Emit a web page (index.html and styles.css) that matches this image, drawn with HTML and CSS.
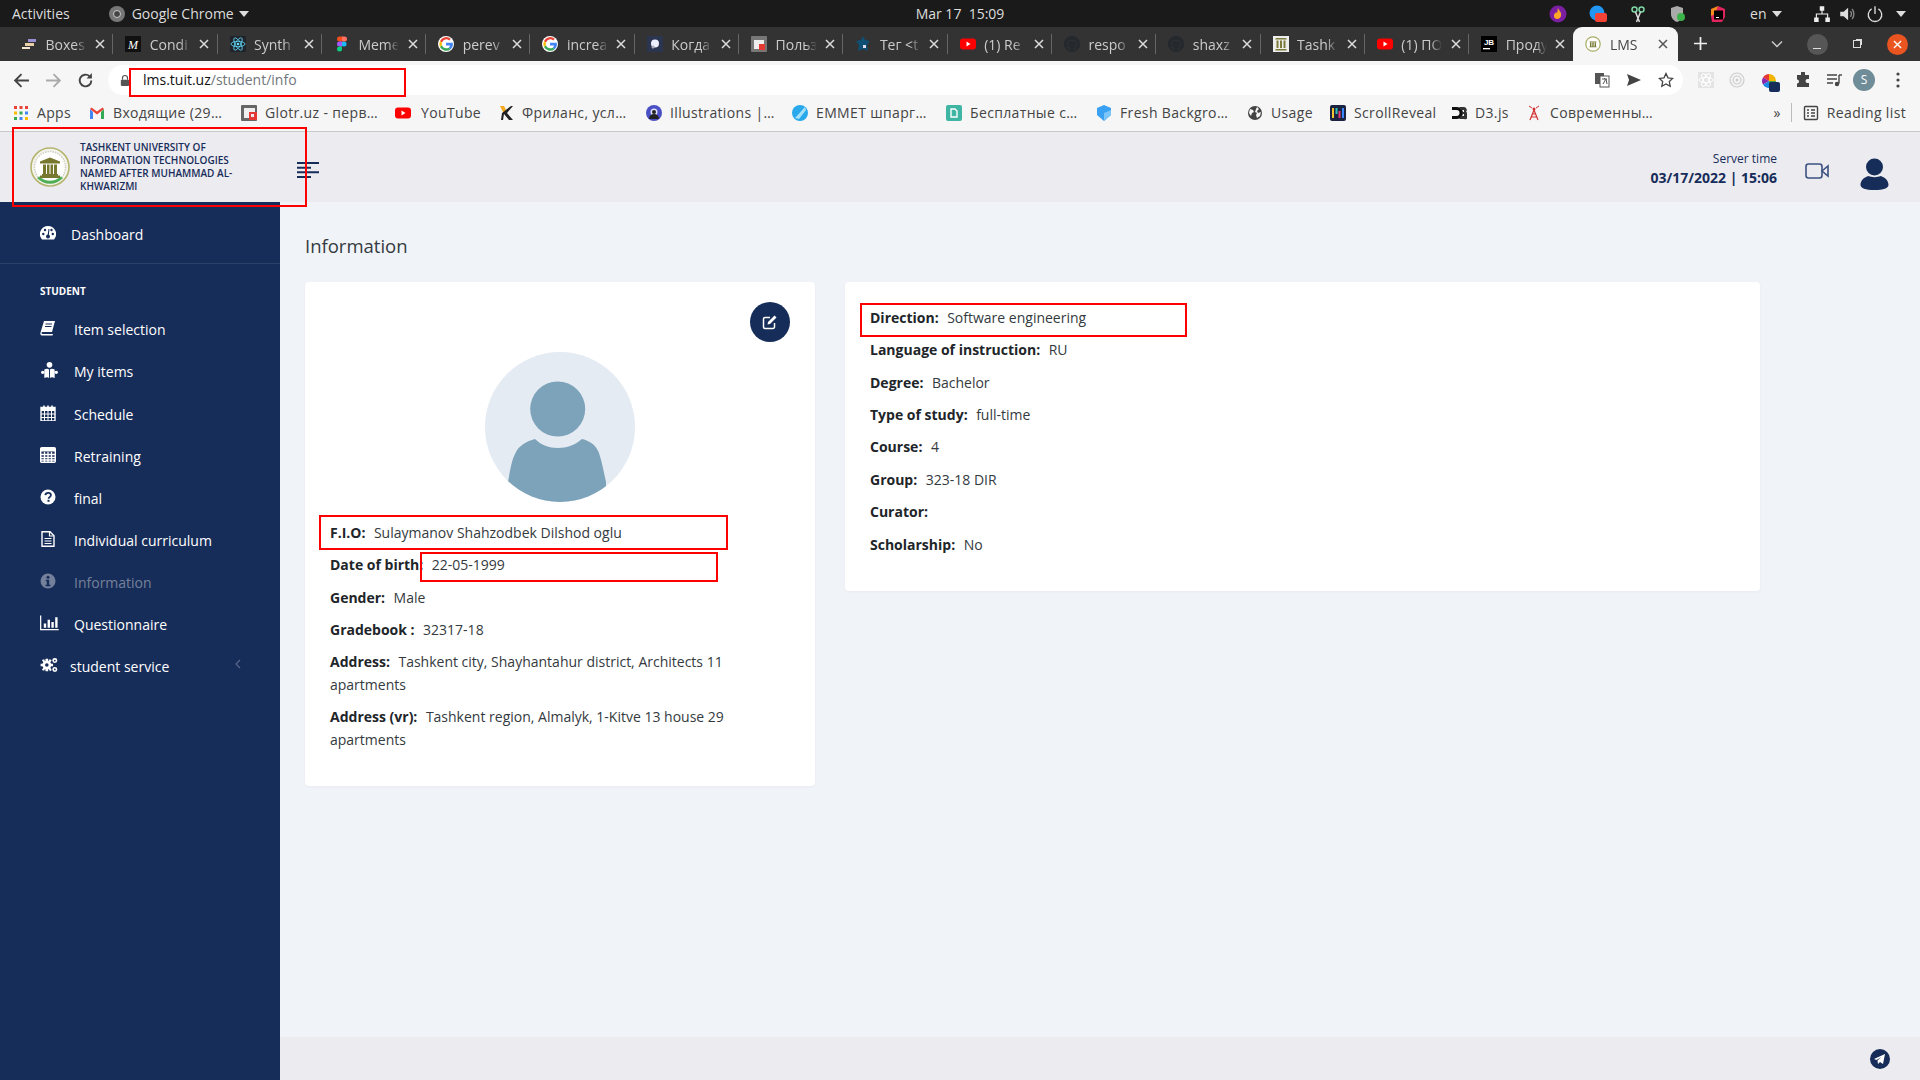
FILE: index.html
```html
<!DOCTYPE html>
<html lang="en">
<head>
  <meta charset="UTF-8">
  <meta name="viewport" content="width=device-width, initial-scale=1.0">
  <title>LMS</title>
  <link rel="stylesheet" href="styles.css">
</head>
<body>
  <svg class="sprite" xmlns="http://www.w3.org/2000/svg">
    <symbol id="google" viewBox="0 0 16 16">
      <circle cx="8" cy="8" r="8" fill="#fff"/>
      <path d="M8 3.2a4.8 4.8 0 0 1 3.2 1.2L12.800 2.800A7 7 0 0 0 2 5l2 1.500A4.800 4.800 0 0 1 8 3.200z" fill="#ea4335"/>
      <path d="M2 5a7 7 0 0 0 0 6l2-1.500a4.800 4.800 0 0 1 0-3z" fill="#fbbc05"/>
      <path d="M2 11a7 7 0 0 0 10.700 2.200l-1.900-1.500A4.800 4.800 0 0 1 4 9.500z" fill="#34a853"/>
      <path d="M14.800 6.800H8v2.600h3.900a3.400 3.400 0 0 1-1.100 2.300l1.900 1.500a7 7 0 0 0 2.100-6.400z" fill="#4285f4"/>
    </symbol>
    <symbol id="youtube" viewBox="0 0 16 16">
      <rect x="0" y="2.500" width="16" height="11" rx="3" fill="#f00"/>
      <path d="M6.500 5.500v5l4-2.500z" fill="#fff"/>
    </symbol>
    <symbol id="github" viewBox="0 0 16 16">
      <circle cx="8" cy="8" r="8" fill="#24292e"/>
      <path d="M5 14v-2.500c-2 .4-2.500-1-2.500-1M11 14v-3c0-1 .8-1.200.8-1.200 1-1 1-3-.2-4.300 0-1-.3-1.500-.3-1.500s-.8 0-1.700.8a6 6 0 0 0-3.200 0C5.500 4 4.700 4 4.700 4s-.3.500-.3 1.500c-1.200 1.300-1.200 3.300-.2 4.300 0 0 .8.200.8 1.200" fill="none" stroke="#333" stroke-width="1"/>
    </symbol>
    <symbol id="close" viewBox="0 0 10 10">
      <path d="M1 1l8 8M9 1l-8 8" fill="none" stroke="currentColor" stroke-width="1.500"/>
    </symbol>
    <symbol id="columns" viewBox="0 0 16 16">
      <path d="M2 3.500h12l-1-1.500H3zM2.500 13h11v1.500h-11z" fill="#7b7b3a"/>
      <path d="M3.500 4.500h2V12h-2zM7 4.500h2V12H7zM10.500 4.500h2V12h-2z" fill="#7b7b3a"/>
    </symbol>
    <symbol id="globe" viewBox="0 0 16 16">
      <circle cx="8" cy="8" r="7" fill="#444"/>
      <path d="M3 4l3 1 1 2-2 1-1 3-2-3zM10 2l2 2-2 2 1 2 3-1-1 4-3 2-1-3 1-2-2-1 1-3z" fill="#f6f6f6"/>
    </symbol>
  </svg>

  <div class="os-bar">
    <div class="os-left">
      <span class="os-activities">Activities</span>
      <svg class="os-chrome" viewBox="0 0 16 16"><circle cx="8" cy="8" r="8" fill="#777"/><circle cx="8" cy="8" r="3.500" fill="#444" stroke="#ccc"/></svg>
      <span>Google Chrome</span>
      <span class="caret"></span>
    </div>
    <div class="os-clock">Mar 17&nbsp; 15:09</div>
    <div class="os-tray">
      <svg class="tray-icon" viewBox="0 0 18 18"><circle cx="9" cy="9" r="8.500" fill="#7b1fa2"/><path d="M9 3c1 3 4 4 3 8-.5 2-2 3-4 3s-3.500-2-3-4c.5-1.500 1.500-2 2-3 .5 1 1 1 1 1 .5-2 .5-3 1-5z" fill="#ffa726"/></svg>
      <svg class="tray-icon" viewBox="0 0 18 18"><circle cx="8" cy="8" r="7.500" fill="#2196f3"/><rect x="6" y="8" width="12" height="9" rx="2" fill="#f44336"/></svg>
      <svg class="tray-icon" viewBox="0 0 18 18"><circle cx="5.500" cy="4.500" r="2.500" fill="none" stroke="#7fd6a4" stroke-width="1.500"/><circle cx="12.500" cy="4.500" r="2.500" fill="none" stroke="#7fd6a4" stroke-width="1.500"/><path d="M6.500 7l4 10M11.500 7l-4 10" stroke="#ddd" stroke-width="1.500"/></svg>
      <svg class="tray-icon" viewBox="0 0 18 18"><path d="M8 1l6 2v6c0 4-3 7-6 8-3-1-6-4-6-8V3z" fill="#aaa"/><circle cx="12" cy="12" r="4" fill="#3cb34a"/></svg>
      <svg class="tray-icon" viewBox="0 0 18 18"><path d="M9 1l7 3v8l-3 5H3l-1-6z" fill="#e0245e"/><path d="M2 4l7-3-3 8-4 2z" fill="#f58a1f"/><rect x="5" y="5.500" width="9" height="9" fill="#000"/><rect x="7" y="12" width="3" height="1" fill="#fff"/></svg>
      <span class="tray-lang">en</span><span class="caret"></span>
      <svg class="tray-icon tray-net" viewBox="0 0 16 16"><path d="M6 1h4v4H6zM1 11h4v4H1zM11 11h4v4h-4zM7.500 5h1v2.500H13.500V11h-1V8.500h-9V11h-1V7.500h5z" fill="#eee"/></svg>
      <svg class="tray-icon tray-sys" viewBox="0 0 16 16"><path d="M2 6h3l4-3.500v11L5 10H2z" fill="#ddd"/><path d="M11 5.500a4 4 0 0 1 0 5M12.500 3.500a7 7 0 0 1 0 9" fill="none" stroke="#888" stroke-width="1.200"/></svg>
      <svg class="tray-icon tray-sys" viewBox="0 0 16 16"><path d="M5 3.500a6 6 0 1 0 6 0M8 1v7" fill="none" stroke="#ddd" stroke-width="1.200"/></svg>
      <span class="caret tray-sys"></span>
    </div>
  </div>

  <div class="tab-strip">
    <div class="tabs">
      <div class="tab">
        <svg class="fav" viewBox="0 0 16 16"><rect x="7" y="3" width="8" height="3" fill="#9b8fd6"/><rect x="4" y="7" width="9" height="3" fill="#e8cfa6"/><rect x="1" y="11" width="8" height="2" fill="#f3e5cf"/></svg>
        <span class="tab-title">Boxes</span>
        <svg class="tab-x"><use href="#close"/></svg>
      </div>
      <div class="tab">
        <svg class="fav" viewBox="0 0 16 16"><rect width="16" height="16" fill="#111"/><text x="8" y="12.500" font-size="12" font-style="italic" font-family="Liberation Serif" text-anchor="middle" fill="#fff">M</text></svg>
        <span class="tab-title">Condi</span>
        <svg class="tab-x"><use href="#close"/></svg>
      </div>
      <div class="tab">
        <svg class="fav" viewBox="0 0 16 16"><rect width="16" height="16" fill="#20232a"/><g fill="none" stroke="#61dafb" stroke-width=".8"><ellipse cx="8" cy="8" rx="7" ry="2.700"/><ellipse cx="8" cy="8" rx="7" ry="2.700" transform="rotate(60 8 8)"/><ellipse cx="8" cy="8" rx="7" ry="2.700" transform="rotate(120 8 8)"/></g><circle cx="8" cy="8" r="1.300" fill="#61dafb"/></svg>
        <span class="tab-title">Synth</span>
        <svg class="tab-x"><use href="#close"/></svg>
      </div>
      <div class="tab">
        <svg class="fav" viewBox="0 0 16 16"><circle cx="10" cy="8" r="2.500" fill="#1abcfe"/><path d="M5.500 5.500a2.500 2.500 0 0 1 0-5H8v5z" fill="#f24e1e"/><path d="M8 .500h2.500a2.500 2.500 0 0 1 0 5H8z" fill="#ff7262"/><path d="M5.500 10.500a2.500 2.500 0 0 1 0-5H8v5z" fill="#a259ff"/><path d="M5.500 15.500a2.500 2.500 0 0 1 0-5H8v2.500a2.500 2.500 0 0 1-2.500 2.500z" fill="#0acf83"/></svg>
        <span class="tab-title">Meme</span>
        <svg class="tab-x"><use href="#close"/></svg>
      </div>
      <div class="tab">
        <svg class="fav"><use href="#google"/></svg>
        <span class="tab-title">perev</span>
        <svg class="tab-x"><use href="#close"/></svg>
      </div>
      <div class="tab">
        <svg class="fav"><use href="#google"/></svg>
        <span class="tab-title">increa</span>
        <svg class="tab-x"><use href="#close"/></svg>
      </div>
      <div class="tab">
        <svg class="fav" viewBox="0 0 16 16"><rect width="16" height="16" fill="#2c3550"/><circle cx="8" cy="7.500" r="4" fill="#eef"/><circle cx="6" cy="11" r="1.500" fill="#aab"/></svg>
        <span class="tab-title">Когда</span>
        <svg class="tab-x"><use href="#close"/></svg>
      </div>
      <div class="tab">
        <svg class="fav" viewBox="0 0 16 16"><rect width="16" height="16" rx="1" fill="#777"/><rect x="3" y="4" width="10" height="9" fill="#eee"/><rect x="8" y="8" width="6" height="6" fill="#e53935"/></svg>
        <span class="tab-title">Польз</span>
        <svg class="tab-x"><use href="#close"/></svg>
      </div>
      <div class="tab">
        <svg class="fav" viewBox="0 0 16 16"><path d="M8 0l2 4 5 1-3 4 1 6-5-2-5 2 1-6-3-4 5-1z" fill="#0e4f74"/><rect x="8" y="9" width="3" height="3" fill="#dde"/></svg>
        <span class="tab-title">Тег &lt;t</span>
        <svg class="tab-x"><use href="#close"/></svg>
      </div>
      <div class="tab">
        <svg class="fav"><use href="#youtube"/></svg>
        <span class="tab-title">(1) Re</span>
        <svg class="tab-x"><use href="#close"/></svg>
      </div>
      <div class="tab">
        <svg class="fav"><use href="#github"/></svg>
        <span class="tab-title">respo</span>
        <svg class="tab-x"><use href="#close"/></svg>
      </div>
      <div class="tab">
        <svg class="fav"><use href="#github"/></svg>
        <span class="tab-title">shaxz</span>
        <svg class="tab-x"><use href="#close"/></svg>
      </div>
      <div class="tab">
        <svg class="fav fav-paper" viewBox="0 0 16 16"><use href="#columns"/></svg>
        <span class="tab-title">Tashk</span>
        <svg class="tab-x"><use href="#close"/></svg>
      </div>
      <div class="tab">
        <svg class="fav"><use href="#youtube"/></svg>
        <span class="tab-title">(1) ПО</span>
        <svg class="tab-x"><use href="#close"/></svg>
      </div>
      <div class="tab tab-before-active">
        <svg class="fav" viewBox="0 0 16 16"><rect width="16" height="16" fill="#000"/><text x="8" y="8.500" font-size="8" font-weight="700" font-family="Liberation Sans" text-anchor="middle" fill="#fff">JB</text><rect x="2" y="12" width="7" height="1.300" fill="#fff"/></svg>
        <span class="tab-title">Проду</span>
        <svg class="tab-x"><use href="#close"/></svg>
      </div>
      <div class="tab tab-active">
        <svg class="fav" viewBox="0 0 16 16"><circle cx="8" cy="8" r="7.200" fill="#fff" stroke="#a9ad62" stroke-width="1.200"/><path d="M4.500 5.500h7v.800h-7zM4.500 10.500h7v.800h-7zM5 6.500h1.400v4H5zM7.300 6.500h1.400v4H7.300zM9.600 6.500H11v4H9.600z" fill="#77772e"/></svg>
        <span class="tab-title">LMS</span>
        <svg class="tab-x"><use href="#close"/></svg>
      </div>
    </div>
    <svg class="tab-plus" viewBox="0 0 12 12"><path d="M6 0v12M0 6h12" stroke="#eee" stroke-width="1.600"/></svg>
    <div class="win-controls">
      <span class="win-btn"><svg class="win-chev" viewBox="0 0 12 8"><path d="M1 1.500l5 5 5-5" fill="none" stroke="#ccc" stroke-width="1.500"/></svg></span>
      <span class="win-btn"><span class="win-round win-min"></span></span>
      <span class="win-btn"><span class="win-restore"></span></span>
      <span class="win-btn"><span class="win-round win-close"><svg class="win-x"><use href="#close"/></svg></span></span>
    </div>
  </div>

  <div class="toolbar">
    <svg class="nav-icon" viewBox="0 0 16 16"><path d="M15 8H2M8 2L2 8l6 6" fill="none" stroke="#444" stroke-width="1.800"/></svg>
    <svg class="nav-icon" viewBox="0 0 16 16"><path d="M1 8h13M8 2l6 6-6 6" fill="none" stroke="#aaa" stroke-width="1.800"/></svg>
    <svg class="nav-icon" viewBox="0 0 16 16"><path d="M13.500 8a5.500 5.500 0 1 1-1.600-3.900" fill="none" stroke="#444" stroke-width="1.800"/><path d="M14 1v5H9z" fill="#444"/></svg>
    <div class="omnibox">
      <svg class="lock" viewBox="0 0 12 14"><path d="M3 6V4a3 3 0 0 1 6 0v2" fill="none" stroke="#555" stroke-width="1.400"/><rect x="1" y="6" width="10" height="7.500" rx="1" fill="#555"/></svg>
      <span class="url"><span class="url-host">lms.tuit.uz</span>/student/info</span>
      <div class="omni-actions">
        <svg class="omni-icon" viewBox="0 0 16 16"><rect x="1" y="1" width="9" height="11" fill="#555"/><rect x="6" y="4" width="9" height="11" fill="#fff" stroke="#555"/><path d="M8 7h5M10.500 6v1M9 12l3-5 1 5" fill="none" stroke="#555"/></svg>
        <svg class="omni-icon" viewBox="0 0 16 16"><path d="M1 2l14 6-14 6 2-6z" fill="#444"/></svg>
        <svg class="omni-icon" viewBox="0 0 16 16"><path d="M8 1.500l2 4.300 4.700.6-3.400 3.200.9 4.700L8 12l-4.200 2.300.9-4.700L1.300 6.400 6 5.800z" fill="none" stroke="#444" stroke-width="1.300"/></svg>
      </div>
    </div>
    <div class="ext-icons">
      <svg class="ext-icon" viewBox="0 0 16 16"><rect width="16" height="16" fill="#e4e4e4"/><g fill="none" stroke="#fff"><ellipse cx="8" cy="8" rx="7" ry="2.700"/><ellipse cx="8" cy="8" rx="7" ry="2.700" transform="rotate(60 8 8)"/><ellipse cx="8" cy="8" rx="7" ry="2.700" transform="rotate(120 8 8)"/></g></svg>
      <svg class="ext-icon" viewBox="0 0 16 16"><g fill="none" stroke="#ccc" stroke-width="1.200"><circle cx="8" cy="8" r="7"/><circle cx="8" cy="8" r="4"/></g><circle cx="8" cy="8" r="1.500" fill="#ccc"/></svg>
      <svg class="ext-icon ext-color" viewBox="0 0 20 20"><path d="M9 2a7 7 0 0 1 7 7H9z" fill="#f4b400"/><path d="M9 2a7 7 0 0 0-6 3.500L9 9z" fill="#e53935"/><path d="M3 5.500a7 7 0 0 0 0 7L9 9z" fill="#8e24aa"/><path d="M3 12.500A7 7 0 0 0 9 16V9z" fill="#1e88e5"/><path d="M9 16a7 7 0 0 0 7-7H9z" fill="#43a047"/><rect x="9" y="10" width="11" height="10" rx="2" fill="#172d59"/></svg>
      <svg class="ext-icon" viewBox="0 0 16 16"><path d="M6 1a2 2 0 0 1 4 0v2h4v4h-1.500a2 2 0 0 0 0 4H14v4H2v-3.500a2 2 0 0 0 0-4V3h4z" fill="#444"/></svg>
      <svg class="ext-icon" viewBox="0 0 16 16"><path d="M1 3h10M1 7h10M1 11h6" stroke="#444" stroke-width="1.400"/><path d="M13 3v8.500" stroke="#444" stroke-width="1.400"/><circle cx="11" cy="12" r="2.200" fill="#444"/><path d="M13 3h3" stroke="#444" stroke-width="1.400"/></svg>
      <span class="profile">S</span>
      <svg class="ext-dots" viewBox="0 0 4 16"><circle cx="2" cy="2" r="1.600" fill="#444"/><circle cx="2" cy="8" r="1.600" fill="#444"/><circle cx="2" cy="14" r="1.600" fill="#444"/></svg>
    </div>
  </div>

  <div class="bookmarks">
    <div class="bm-list">
      <div class="bm">
        <svg class="bm-icon" viewBox="0 0 16 16"><g><rect x="1" y="1" width="3" height="3" fill="#ea4335"/><rect x="6.500" y="1" width="3" height="3" fill="#ea4335"/><rect x="12" y="1" width="3" height="3" fill="#ea4335"/><rect x="1" y="6.500" width="3" height="3" fill="#fbbc05"/><rect x="6.500" y="6.500" width="3" height="3" fill="#34a853"/><rect x="12" y="6.500" width="3" height="3" fill="#4285f4"/><rect x="1" y="12" width="3" height="3" fill="#34a853"/><rect x="6.500" y="12" width="3" height="3" fill="#4285f4"/><rect x="12" y="12" width="3" height="3" fill="#fbbc05"/></g></svg>
        <span>Apps</span>
      </div>
      <div class="bm">
        <svg class="bm-icon" viewBox="0 0 16 16"><path d="M1 4v10h3V7z" fill="#4285f4"/><path d="M15 4v10h-3V7z" fill="#34a853"/><path d="M1 4l7 5.500L15 4l-1.500-1.500L8 6.500 2.500 2.500z" fill="#ea4335"/></svg>
        <span>Входящие (29…</span>
      </div>
      <div class="bm">
        <svg class="bm-icon" viewBox="0 0 16 16"><rect width="16" height="16" rx="1" fill="#666"/><rect x="3" y="3" width="11" height="10" fill="#eee"/><rect x="8" y="7" width="8" height="8" fill="#e53935"/><rect x="10" y="9" width="3" height="3" fill="#eee"/></svg>
        <span>Glotr.uz - перв…</span>
      </div>
      <div class="bm bm-yt">
        <svg class="bm-icon"><use href="#youtube"/></svg>
        <span>YouTube</span>
      </div>
      <div class="bm">
        <svg class="bm-icon" viewBox="0 0 16 16"><path d="M2 1h4l3 6-3 2z" fill="#f4a91f"/><path d="M4 8l9-7h2l-6 7 6 7h-4l-5-6-1 6H3z" fill="#222"/></svg>
        <span>Фриланс, усл…</span>
      </div>
      <div class="bm">
        <svg class="bm-icon" viewBox="0 0 16 16"><circle cx="8" cy="8" r="8" fill="#4a4fc4"/><circle cx="8" cy="7" r="3.500" fill="#e0e0ff"/><circle cx="8" cy="7" r="2" fill="#222"/><path d="M3 14a5 5 0 0 1 10 0z" fill="#222"/></svg>
        <span>Illustrations |…</span>
      </div>
      <div class="bm">
        <svg class="bm-icon" viewBox="0 0 16 16"><circle cx="8" cy="8" r="8" fill="#29a9eb"/><path d="M3 13L13 2l1 3-7 9z" fill="#a7e0fb"/></svg>
        <span>EMMET шпарг…</span>
      </div>
      <div class="bm">
        <svg class="bm-icon" viewBox="0 0 16 16"><rect width="16" height="16" rx="2" fill="#3fb5a3"/><path d="M5 4h4l2 2v6H5z" fill="none" stroke="#fff" stroke-width="1.400"/></svg>
        <span>Бесплатные с…</span>
      </div>
      <div class="bm">
        <svg class="bm-icon" viewBox="0 0 16 16"><path d="M1 3l7-3 7 3v7l-7 6-7-6z" fill="#3aa0f2"/><path d="M8 8l7-3v5l-7 6z" fill="#7cc5f8"/></svg>
        <span>Fresh Backgro…</span>
      </div>
      <div class="bm">
        <svg class="bm-icon"><use href="#globe"/></svg>
        <span>Usage</span>
      </div>
      <div class="bm">
        <svg class="bm-icon" viewBox="0 0 16 16"><rect width="16" height="16" rx="2" fill="#1c2340"/><path d="M3 3v10" stroke="#f4c430" stroke-width="2"/><path d="M6.500 3v6" stroke="#2ec4b6" stroke-width="2"/><path d="M9.500 6v7" stroke="#e63973" stroke-width="2"/><path d="M13 3v10" stroke="#3a86ff" stroke-width="2"/></svg>
        <span>ScrollReveal</span>
      </div>
      <div class="bm">
        <svg class="bm-icon" viewBox="0 0 16 16"><path d="M1 2h5a6 6 0 0 1 0 12H1v-3h4.500a3 3 0 0 0 0-6H1z" fill="#111"/><path d="M8 2h5a3 3 0 0 1 2 5 3 3 0 0 1-2 7H8a7 7 0 0 0 2-3h3v-2h-2a6 6 0 0 0 0-2h2V5h-3a7 7 0 0 0-2-3z" fill="#333"/></svg>
        <span>D3.js</span>
      </div>
      <div class="bm">
        <svg class="bm-icon" viewBox="0 0 16 16"><path d="M8 5L4 15M8 5l4 10M6 9h4M5 12h6" fill="none" stroke="#d32f2f" stroke-width="1.200"/><circle cx="8" cy="4" r="1.500" fill="#d32f2f"/><path d="M3 1l3 2M13 1l-3 2" stroke="#d32f2f"/></svg>
        <span>Современны…</span>
      </div>
    </div>
    <div class="bm-right">
      <span class="bm-more">»</span>
      <span class="bm-sep"></span>
      <svg class="bm-icon" viewBox="0 0 16 16"><rect x="1.500" y="1.500" width="13" height="13" rx="1" fill="none" stroke="#444" stroke-width="1.400"/><path d="M4 5h2M8 5h4M4 8h2M8 8h4M4 11h2M8 11h4" stroke="#444" stroke-width="1.300"/></svg>
      <span>Reading list</span>
    </div>
  </div>

  <div class="app">
    <header class="app-header">
      <div class="brand">
        <svg class="brand-logo" viewBox="0 0 40 40">
          <circle cx="20" cy="20" r="19" fill="#f4f4ee" stroke="#b4b56c" stroke-width="1.600"/>
          <circle cx="20" cy="20" r="15.500" fill="#fff" stroke="#cfcfc2" stroke-width="1.500" stroke-dasharray="1.500 1"/>
          <path d="M7 31a17.500 17.500 0 0 0 26 0l-2.500-1.500a15 15 0 0 1-21 0z" fill="#4fae55"/>
          <path d="M20 10.500L10 14.500v2h20v-2z" fill="#77772e"/>
          <path d="M12 27h16v1.500h2V31H10v-2.500h2z" fill="#77772e"/>
          <path d="M13 17.500h3V27h-3zM17 17.500h2.500V27H17zM20.500 17.500H23V27h-2.500zM24 17.500h3V27h-3z" fill="#77772e"/>
        </svg>
        <div class="brand-name">TASHKENT UNIVERSITY OF INFORMATION TECHNOLOGIES NAMED AFTER MUHAMMAD AL-KHWARIZMI</div>
      </div>
      <svg class="burger" viewBox="0 0 22 16"><path d="M0 1h22M0 5.700h14M0 10.300h22M0 15h14" stroke="#172d59" stroke-width="2"/></svg>
      <div class="header-right">
        <div class="server-time">
          <div class="server-label">Server time</div>
          <div class="server-value">03/17/2022 | 15:06</div>
        </div>
        <svg class="video-icon" viewBox="0 0 24 16"><rect x="1" y="1" width="16" height="14" rx="2.500" fill="none" stroke="#3c5180" stroke-width="1.600"/><path d="M17 8l6-5v10z" fill="none" stroke="#3c5180" stroke-width="1.600"/></svg>
        <svg class="user-icon" viewBox="0 0 29 32"><circle cx="14.500" cy="9" r="8.500" fill="#172d59"/><path d="M.500 27c0-5 4-8 8-9 3 1.500 9 1.500 12 0 4 1 8 4 8 9 0 3-5 5-14 5S.500 30 .500 27z" fill="#172d59"/></svg>
      </div>
    </header>

    <div class="app-body">
      <aside class="sidebar">
        <div class="side-top">
          <a class="side-link side-link-dash">
            <svg class="side-icon" viewBox="0 0 16 14"><path d="M8 0a8 8 0 0 0-7 12l1 1.500h12l1-1.500A8 8 0 0 0 8 0z" fill="#fff"/><g fill="#172d59"><circle cx="3.300" cy="8" r="1.200"/><circle cx="5" cy="4" r="1.200"/><circle cx="11.500" cy="4" r="1.200"/><circle cx="12.800" cy="8" r="1.200"/><circle cx="8" cy="10.500" r="2"/><path d="M7.500 10l1-7h1l-.8 7z"/></g></svg>
            <span>Dashboard</span>
          </a>
        </div>
        <div class="side-label">STUDENT</div>
        <a class="side-link">
          <svg class="side-icon" viewBox="0 0 16 16"><path d="M4 1h11l-3 11H2.500c-1.500 0-1 2 0 2h10.500l-.5 1.500H2C.5 15.500 0 14 .500 12.500z" fill="#fff"/><path d="M5.500 4h6.500M5 6.500h6.500" stroke="#172d59"/></svg>
          <span>Item selection</span>
        </a>
        <a class="side-link">
          <svg class="side-icon side-icon-wide" viewBox="0 0 18 17"><circle cx="9" cy="3" r="3" fill="#fff"/><path d="M3.500 8c2-1.200 4-1.200 5 0v9c-1-1-3-1-5 0zM14.500 8c-2-1.200-4-1.200-5 0v9c1-1 3-1 5 0z" fill="#fff"/><circle cx="1.800" cy="11" r="1.800" fill="#fff"/><circle cx="16.200" cy="11" r="1.800" fill="#fff"/></svg>
          <span>My items</span>
        </a>
        <a class="side-link">
          <svg class="side-icon" viewBox="0 0 16 16"><path d="M1 2.500h14V16H1z" fill="none" stroke="#fff" stroke-width="1.400"/><path d="M1 3h14v3H1z" fill="#fff"/><path d="M4 .500v3.500M8 .500v3.500M12 .500v3.500" stroke="#fff" stroke-width="1.600"/><path d="M1 9h14M1 12.500h14M4.500 6v10M8 6v10M11.500 6v10" stroke="#fff"/></svg>
          <span>Schedule</span>
        </a>
        <a class="side-link">
          <svg class="side-icon" viewBox="0 0 16 16"><rect x=".700" y=".700" width="14.600" height="14.600" rx="1" fill="none" stroke="#fff" stroke-width="1.400"/><rect x="1" y="1" width="14" height="3.500" fill="#fff"/><path d="M1 7.500h14M1 10.500h14M1 13h14M4.500 5v10M8 5v10M11.500 5v10" stroke="#fff" stroke-width="1.300"/></svg>
          <span>Retraining</span>
        </a>
        <a class="side-link">
          <svg class="side-icon" viewBox="0 0 16 16"><circle cx="8" cy="8" r="7.500" fill="#fff"/><path d="M5.300 6.200C5.500 4.500 6.800 3.800 8.200 3.800c1.500 0 2.700 1 2.700 2.300 0 2-2.300 2-2.300 3.600" fill="none" stroke="#172d59" stroke-width="1.800"/><rect x="7.500" y="10.800" width="2" height="2" fill="#172d59"/></svg>
          <span>final</span>
        </a>
        <a class="side-link">
          <svg class="side-icon" viewBox="0 0 16 16"><path d="M2 .700h8l4 4v10.600H2z" fill="none" stroke="#fff" stroke-width="1.400"/><path d="M9.500 1v4h4" fill="none" stroke="#fff" stroke-width="1.200"/><path d="M4.500 7.500h7M4.500 10h7M4.500 12.500h7" stroke="#fff" stroke-width="1.200"/></svg>
          <span>Individual curriculum</span>
        </a>
        <a class="side-link side-link-current">
          <svg class="side-icon" viewBox="0 0 16 16"><circle cx="8" cy="8" r="7.500" fill="#75819b"/><circle cx="8" cy="4.300" r="1.500" fill="#172d59"/><path d="M5.800 6.800h3.400v5H10.500v1.500h-5v-1.500h1.300V8.300H5.800z" fill="#172d59"/></svg>
          <span>Information</span>
        </a>
        <a class="side-link">
          <svg class="side-icon side-icon-wide" viewBox="0 0 20 16"><path d="M.700 0v15h19" fill="none" stroke="#fff" stroke-width="1.300"/><path d="M4 8.500h2.500V13H4zM8 4.500h2.500V13H8zM12 7h2.500v6H12zM16 2h2.500v11H16z" fill="#fff"/></svg>
          <span>Questionnaire</span>
        </a>
        <a class="side-link side-link-sub">
          <svg class="side-icon side-icon-wide" viewBox="0 0 20 18"><g fill="#fff"><circle cx="7" cy="9" r="5"/><circle cx="16" cy="4" r="2.800"/><circle cx="16" cy="14" r="2.800"/><path d="M5.500 2h3v3h-3zM5.500 13h3v3h-3zM0 7.500h3v3H0zM11 7.500h3v3h-3zM1.500 3.500L4 2.500 5 5 3 6zM9 13l2 -1 1.500 2.500L10.500 16zM1.500 14.500L3 12l2 1-1 2.500zM9 5l1-2.500 2.500 1L11 6z"/></g><circle cx="7" cy="9" r="2" fill="#172d59"/><circle cx="16" cy="4" r="1" fill="#172d59"/><circle cx="16" cy="14" r="1" fill="#172d59"/></svg>
          <span>student service</span>
          <svg class="side-chev" viewBox="0 0 6 10"><path d="M5 1L1 5l4 4" fill="none" stroke="#55668a" stroke-width="1.200"/></svg>
        </a>
      </aside>

      <div class="main">
        <main class="content">
          <h2 class="page-title">Information</h2>
          <div class="cards">
            <section class="card card-profile">
              <div class="edit-row">
                <span class="edit-btn">
                  <svg viewBox="0 0 16 16"><path d="M12.500 9v4a1.500 1.500 0 0 1-1.500 1.500H3A1.500 1.500 0 0 1 1.500 13V5A1.500 1.500 0 0 1 3 3.500h5" fill="none" stroke="#fff" stroke-width="1.500"/><path d="M6 8l6.500-6.500 2 2L8 10l-2.500.5z" fill="#fff"/></svg>
                </span>
              </div>
              <svg class="avatar" viewBox="0 0 150 150">
                <defs><clipPath id="avatar-clip"><circle cx="75" cy="75" r="75"/></clipPath></defs>
                <circle cx="75" cy="75" r="75" fill="#e4ebf3"/>
                <circle cx="72.700" cy="57" r="27.500" fill="#7da3ba"/>
                <path clip-path="url(#avatar-clip)" d="M50 87c6 6 14 9 23 9s17-3 24-9c8 2 14 6 17 14 3 9 5 20 7 29v20H23v-20c2-10 3-20 7-28 3-8 12-13 20-15z" fill="#7da3ba"/>
              </svg>
              <p class="row"><b>F.I.O:</b>Sulaymanov Shahzodbek Dilshod oglu</p>
              <p class="row"><b>Date of birth:</b>22-05-1999</p>
              <p class="row"><b>Gender:</b>Male</p>
              <p class="row"><b>Gradebook :</b>32317-18</p>
              <p class="row"><b>Address:</b>Tashkent city, Shayhantahur district, Architects 11<br>apartments</p>
              <p class="row"><b>Address (vr):</b>Tashkent region, Almalyk, 1-Kitve 13 house 29<br>apartments</p>
            </section>
            <section class="card card-study">
              <p class="row"><b>Direction:</b>Software engineering</p>
              <p class="row"><b>Language of instruction:</b>RU</p>
              <p class="row"><b>Degree:</b>Bachelor</p>
              <p class="row"><b>Type of study:</b>full-time</p>
              <p class="row"><b>Course:</b>4</p>
              <p class="row"><b>Group:</b>323-18 DIR</p>
              <p class="row"><b>Curator:</b></p>
              <p class="row"><b>Scholarship:</b>No</p>
            </section>
          </div>
        </main>
        <footer class="app-footer">
          <svg class="telegram" viewBox="0 0 20 20"><circle cx="10" cy="10" r="10" fill="#172d59"/><path d="M4 10l11-5-2 10-3-2-2 2-.5-3.500 4-3.500-5 3z" fill="#fff"/></svg>
        </footer>
      </div>
    </div>
  </div>

  <!-- red marks drawn over the screenshot -->
  <div class="mark mark-url"></div>
  <div class="mark mark-logo"></div>
  <div class="mark mark-fio"></div>
  <div class="mark mark-dob"></div>
  <div class="mark mark-direction"></div>
</body>
</html>
```

FILE: styles.css
```css
* {
  box-sizing: border-box;
}

body {
  margin: 0;
  height: 1080px;
  overflow: hidden;
  display: flex;
  flex-direction: column;
  font-family: "Open Sans", "Noto Sans", sans-serif;
  font-size: 14px;
  color: #333;
  background-color: #f0f4f8;
  position: relative;
}

.sprite {
  display: none;
}

/* desktop bar */
.os-bar {
  height: 27px;
  flex: none;
  display: grid;
  grid-template-columns: 1fr auto 1fr;
  align-items: center;
  background-color: #1a1a1a;
  color: #ddd;
}

.os-left {
  display: flex;
  align-items: center;
  padding-left: 12px;
}

.os-activities {
  margin-right: 39px;
}

.os-chrome {
  width: 16px;
  height: 16px;
  margin-right: 7px;
}

.caret {
  width: 0;
  height: 0;
  margin-left: 5px;
  border-left: 5px solid transparent;
  border-right: 5px solid transparent;
  border-top: 6px solid #ddd;
}

.os-clock {
  text-align: center;
}

.os-tray {
  display: flex;
  align-items: center;
  justify-content: flex-end;
  padding-right: 14px;
}

.tray-icon {
  width: 18px;
  height: 18px;
  margin-right: 22px;
}

.tray-lang {
  margin-left: 1.500px;
}

.tray-net {
  margin-left: 31px;
  margin-right: 7.500px;
  width: 18px;
}

.tray-sys {
  margin-right: 10px;
}

.tray-icon.tray-sys {
  width: 18px;
}

.caret.tray-sys {
  margin-right: 0;
  margin-left: 2px;
}

/* tab strip */
.tab-strip {
  height: 34px;
  flex: none;
  display: flex;
  align-items: stretch;
  background-color: #333;
  color: #ccc;
}

.tabs {
  display: flex;
  padding-left: 9px;
}

.tab {
  width: 104.3px;
  position: relative;
  display: flex;
  align-items: center;
  padding-left: 12px;
}

.tab::after {
  content: "";
  position: absolute;
  right: 0;
  top: 7px;
  height: 20px;
  width: 1px;
  background-color: #666;
}

.tab-before-active::after,
.tab-active::after {
  display: none;
}

.fav {
  width: 16px;
  height: 16px;
  flex: none;
  margin-right: 8.500px;
}

.fav-paper {
  background-color: #eee;
}

.tab-title {
  width: 41px;
  overflow: hidden;
  white-space: nowrap;
  -webkit-mask-image: linear-gradient(to right, #000 72%, transparent);
  mask-image: linear-gradient(to right, #000 72%, transparent);
}

.tab-x {
  width: 10px;
  height: 10px;
  flex: none;
  margin-left: 8.500px;
  color: #ddd;
}

.tab-active {
  background-color: #f6f6f6;
  color: #444;
  border-radius: 9px 9px 0 0;
}

.tab-active .tab-x {
  color: #555;
  margin-left: 7.500px;
}

.tab-plus {
  width: 13px;
  height: 13px;
  margin: 10px 0 0 16px;
}

.win-controls {
  margin-left: auto;
  display: flex;
  align-items: center;
  padding-right: 3px;
}

.win-btn {
  width: 40px;
  display: flex;
  justify-content: center;
  align-items: center;
}

.win-chev {
  width: 12px;
  height: 8px;
}

.win-round {
  width: 21px;
  height: 21px;
  border-radius: 50%;
  display: flex;
  justify-content: center;
  align-items: center;
}

.win-min {
  background-color: #565656;
  position: relative;
}

.win-min::after {
  content: "";
  width: 8px;
  height: 1px;
  margin-top: 8px;
  background-color: #ddd;
}

.win-restore {
  width: 8px;
  height: 8px;
  border: 1px solid #ddd;
  box-shadow: 2px -2px 0 -1px #ddd;
}

.win-close {
  background-color: #e95420;
  color: #fff;
}

.win-x {
  width: 9px;
  height: 9px;
}

/* address bar */
.toolbar {
  height: 34px;
  flex: none;
  display: flex;
  align-items: flex-start;
  padding: 4px 0 0 13px;
  background-color: #f6f6f6;
}

.nav-icon {
  width: 17px;
  height: 17px;
  margin: 7px 15px 0 0;
}

.omnibox {
  margin-left: -1px;
  width: 1575px;
  height: 30px;
  display: flex;
  align-items: center;
  padding-left: 12px;
  background-color: #fff;
  border-radius: 15px;
}

.lock {
  width: 10px;
  height: 13px;
  margin-right: 13px;
}

.url {
  color: #70757a;
  font-size: 14px;
  margin-bottom: 2px;
}

.url-host {
  color: #111;
}

.omni-actions {
  margin-left: auto;
  display: flex;
  gap: 16px;
  padding-right: 9px;
}

.omni-icon {
  width: 16px;
  height: 16px;
}

.ext-icons {
  display: flex;
  align-items: center;
  height: 30px;
  margin-left: 15px;
}

.ext-icon {
  width: 16px;
  height: 16px;
  margin-right: 15px;
}

.ext-color {
  width: 20px;
  height: 20px;
  margin-top: 4px;
}

.profile {
  width: 22px;
  height: 22px;
  margin-left: -4px;
  border-radius: 50%;
  background-color: #6f8c99;
  color: #fff;
  font-size: 12px;
  text-align: center;
  line-height: 22px;
}

.ext-dots {
  width: 4px;
  height: 18px;
  margin-left: 21px;
}

/* bookmarks */
.bookmarks {
  height: 37px;
  flex: none;
  display: flex;
  align-items: center;
  padding-left: 13px;
  padding-bottom: 1px;
  background-color: #f6f6f6;
  border-bottom: 1px solid #c8c8c8;
  color: #444;
  letter-spacing: 0.35px;
}

.bm-list {
  display: grid;
  grid-template-columns: 76px 152px 154px 103px 148px 146px 154px 150px 151px 83px 121px 75px 170px;
  align-items: center;
}

.bm {
  display: flex;
  align-items: center;
  white-space: nowrap;
}

.bm-icon {
  width: 16px;
  height: 16px;
  flex: none;
  margin-right: 8px;
}

.bm-yt .bm-icon {
  margin-right: 10px;
}

.bm-right {
  margin-left: auto;
  display: flex;
  align-items: center;
  padding-right: 14px;
}

.bm-more {
  margin-right: 10px;
}

.bm-sep {
  width: 1px;
  height: 19px;
  margin-right: 11px;
  background-color: #bbb;
}

/* lms page */
.app {
  flex: 1;
  min-height: 0;
  display: flex;
  flex-direction: column;
}

.app-header {
  height: 70px;
  flex: none;
  display: flex;
  align-items: center;
  background-color: #ecebf0;
  color: #172d59;
}

.brand {
  width: 280px;
  display: flex;
  align-items: center;
  padding-left: 30px;
}

.brand-logo {
  width: 40px;
  height: 40px;
  flex: none;
}

.brand-name {
  width: 170px;
  margin-left: 10px;
  font-size: 10px;
  line-height: 13px;
  font-weight: 600;
}

.burger {
  width: 22px;
  height: 16px;
  margin: 6px 0 0 17px;
}

.header-right {
  margin-left: auto;
  display: flex;
  align-items: center;
  padding-right: 31px;
}

.server-time {
  text-align: right;
  margin-top: 2px;
}

.server-label {
  font-size: 12px;
  line-height: 19px;
}

.server-value {
  font-weight: 700;
  line-height: 19px;
}

.video-icon {
  width: 24px;
  height: 16px;
  margin: 8px 0 0 28px;
}

.user-icon {
  width: 29px;
  height: 32px;
  margin: 14px 0 0 31px;
}

.app-body {
  flex: 1;
  min-height: 0;
  display: flex;
}

.sidebar {
  width: 280px;
  flex: none;
  background-color: #172d59;
  color: #fff;
}

.side-top {
  height: 62px;
  padding-top: 11px;
  border-bottom: 1px solid #2c4068;
}

.side-link {
  height: 42.1px;
  display: flex;
  align-items: center;
  padding-left: 40px;
}

.side-icon {
  width: 16px;
  height: 16px;
  flex: none;
  margin-right: 18px;
  margin-top: -3px;
}

.side-icon-wide {
  width: 19px;
  margin-right: 15px;
}

.side-link-dash .side-icon {
  margin-right: 15px;
}

.side-link-sub .side-icon {
  margin-right: 11px;
}

.side-link-current {
  color: #75819b;
}

.side-label {
  height: 14px;
  margin: 20px 0 10.800px;
  padding-left: 40px;
  font-size: 10px;
  line-height: 14px;
  font-weight: 700;
}

.side-chev {
  width: 6px;
  height: 10px;
  margin: -6px 39px 0 auto;
}

.main {
  flex: 1;
  min-width: 0;
  display: flex;
  flex-direction: column;
}

.content {
  flex: 1;
  padding: 0 25px;
}

.page-title {
  margin: 0;
  height: 80px;
  padding-top: 31px;
  font-size: 18.500px;
  line-height: 26px;
  font-weight: 400;
  color: #343a40;
}

.cards {
  display: grid;
  grid-template-columns: 510px 915px;
  gap: 30px;
  align-items: start;
}

.card {
  padding: 24.800px 25px 25px;
  background-color: #fff;
  border-radius: 4px;
  box-shadow: 0 1px 3px rgba(0, 0, 0, 0.04);
}

.card-profile {
  padding-top: 20px;
}

.edit-row {
  display: flex;
  justify-content: flex-end;
  height: 50px;
}

.edit-btn {
  width: 40px;
  height: 40px;
  border-radius: 50%;
  background-color: #172d59;
  display: flex;
  align-items: center;
  justify-content: center;
}

.edit-btn svg {
  width: 16px;
  height: 16px;
}

.avatar {
  display: block;
  width: 150px;
  height: 150px;
  margin: 0 auto 19.800px;
}

.row {
  margin: 0 0 10px;
  line-height: 22.4px;
  color: #343a40;
}

.row b {
  color: #212529;
  font-weight: 700;
  margin-right: 8.500px;
}

/* marks */
.mark {
  position: absolute;
  border: 2px solid #f00;
}

.mark-url {
  left: 129px;
  top: 68px;
  width: 277px;
  height: 29px;
}

.mark-logo {
  left: 12px;
  top: 127px;
  width: 295px;
  height: 80px;
}

.mark-fio {
  left: 319px;
  top: 515px;
  width: 409px;
  height: 35px;
}

.mark-dob {
  left: 420px;
  top: 552px;
  width: 298px;
  height: 30px;
}

.mark-direction {
  left: 860px;
  top: 303px;
  width: 327px;
  height: 34px;
}

.app-footer {
  height: 43px;
  flex: none;
  display: flex;
  align-items: center;
  justify-content: flex-end;
  padding-right: 30px;
  background-color: #ecebf0;
}

.telegram {
  width: 20px;
  height: 20px;
}
```
